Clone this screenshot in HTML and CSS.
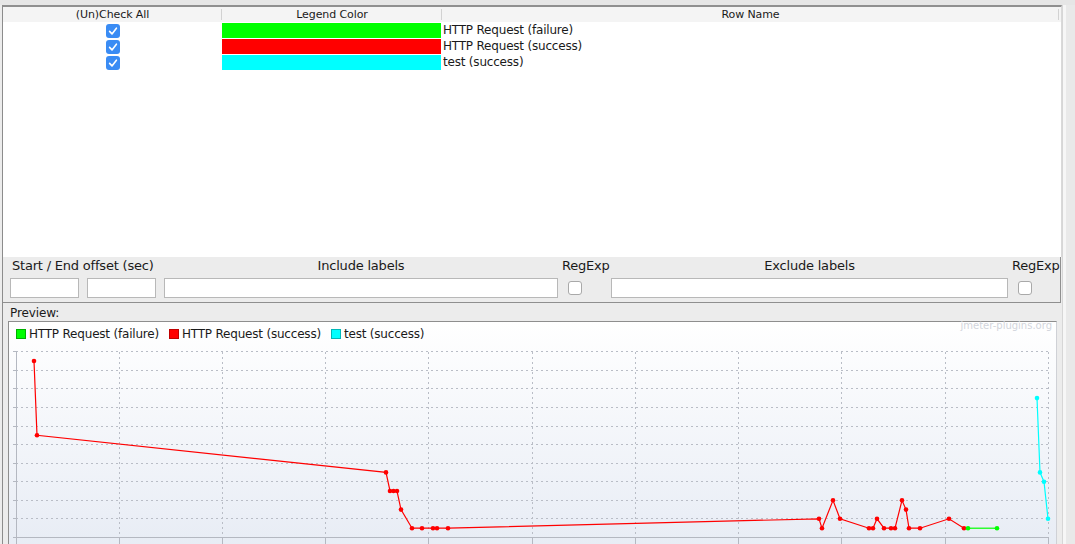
FILE: index.html
```html
<!DOCTYPE html>
<html>
<head>
<meta charset="utf-8">
<link rel="stylesheet" href="styles.css">
</head>
<body>
<div class="app">
  <div class="topbar"></div>
  <div class="row">
    <div class="main">
      <div class="table-panel">
        <div class="thead">
          <div class="th c1">(Un)Check All</div>
          <div class="th c2">Legend Color</div>
          <div class="th c3">Row Name</div>
        </div>
        <div class="tbody">
          <div class="tr">
            <div class="td c1"><svg class="cb" width="14" height="14" viewBox="0 0 14 14"><rect x="0" y="0" width="14" height="14" rx="3" fill="#3a8cf4"/><path d="M3.6 7.4 L6 9.9 L10.4 4.2" fill="none" stroke="#fff" stroke-width="1.6" stroke-linecap="round" stroke-linejoin="round"/></svg></div>
            <div class="td c2"><span class="swatch green"></span></div>
            <div class="td c3">HTTP Request (failure)</div>
          </div>
          <div class="tr">
            <div class="td c1"><svg class="cb" width="14" height="14" viewBox="0 0 14 14"><rect x="0" y="0" width="14" height="14" rx="3" fill="#3a8cf4"/><path d="M3.6 7.4 L6 9.9 L10.4 4.2" fill="none" stroke="#fff" stroke-width="1.6" stroke-linecap="round" stroke-linejoin="round"/></svg></div>
            <div class="td c2"><span class="swatch red"></span></div>
            <div class="td c3">HTTP Request (success)</div>
          </div>
          <div class="tr">
            <div class="td c1"><svg class="cb" width="14" height="14" viewBox="0 0 14 14"><rect x="0" y="0" width="14" height="14" rx="3" fill="#3a8cf4"/><path d="M3.6 7.4 L6 9.9 L10.4 4.2" fill="none" stroke="#fff" stroke-width="1.6" stroke-linecap="round" stroke-linejoin="round"/></svg></div>
            <div class="td c2"><span class="swatch cyan"></span></div>
            <div class="td c3">test (success)</div>
          </div>
        </div>
      </div>

      <div class="filter-panel">
        <div class="lbl left">Start / End offset (sec)</div>
        <div class="lbl">Include labels</div>
        <div class="lbl">RegExp</div>
        <div class="lbl">Exclude labels</div>
        <div class="lbl">RegExp</div>
        <div class="offsets"><span class="input small"></span><span class="input small"></span></div>
        <span class="input"></span>
        <div class="cbcell"><span class="box"></span></div>
        <span class="input"></span>
        <div class="cbcell"><span class="box"></span></div>
      </div>

      <div class="preview-panel">
        <div class="preview-label">Preview:</div>
        <div class="chart">
          <div class="chart-head">
            <div class="legend">
              <span class="item"><span class="sq green"></span>HTTP Request (failure)</span>
              <span class="item"><span class="sq red"></span>HTTP Request (success)</span>
              <span class="item"><span class="sq cyan"></span>test (success)</span>
            </div>
            <div class="watermark">jmeter-plugins.org</div>
          </div>
          <svg class="plot" width="1047" height="198" viewBox="0 0 1047 198">
            <g stroke="#b9bdc6" stroke-width="1" stroke-dasharray="2 3" fill="none">
              <line x1="7" y1="5.5" x2="1040" y2="5.5"/>
              <line x1="7" y1="24.5" x2="1040" y2="24.5"/>
              <line x1="7" y1="42.5" x2="1040" y2="42.5"/>
              <line x1="7" y1="61.5" x2="1040" y2="61.5"/>
              <line x1="7" y1="80.5" x2="1040" y2="80.5"/>
              <line x1="7" y1="98.5" x2="1040" y2="98.5"/>
              <line x1="7" y1="117.5" x2="1040" y2="117.5"/>
              <line x1="7" y1="135.5" x2="1040" y2="135.5"/>
              <line x1="7" y1="154.5" x2="1040" y2="154.5"/>
              <line x1="7" y1="172.5" x2="1040" y2="172.5"/>
              <line x1="110.5" y1="6" x2="110.5" y2="191"/>
              <line x1="213.5" y1="6" x2="213.5" y2="191"/>
              <line x1="316.5" y1="6" x2="316.5" y2="191"/>
              <line x1="419.5" y1="6" x2="419.5" y2="191"/>
              <line x1="523.5" y1="6" x2="523.5" y2="191"/>
              <line x1="626.5" y1="6" x2="626.5" y2="191"/>
              <line x1="729.5" y1="6" x2="729.5" y2="191"/>
              <line x1="832.5" y1="6" x2="832.5" y2="191"/>
              <line x1="936.5" y1="6" x2="936.5" y2="191"/>
              <line x1="1039.5" y1="6" x2="1039.5" y2="191"/>
            </g>
            <g stroke="#b4b8c1" stroke-width="1" fill="none">
              <line x1="7.5" y1="5" x2="7.5" y2="198"/>
              <line x1="4" y1="191.5" x2="1040" y2="191.5"/>
              <line x1="4" y1="5.5" x2="7" y2="5.5"/>
              <line x1="4" y1="24.5" x2="7" y2="24.5"/>
              <line x1="4" y1="42.5" x2="7" y2="42.5"/>
              <line x1="4" y1="61.5" x2="7" y2="61.5"/>
              <line x1="4" y1="80.5" x2="7" y2="80.5"/>
              <line x1="4" y1="98.5" x2="7" y2="98.5"/>
              <line x1="4" y1="117.5" x2="7" y2="117.5"/>
              <line x1="4" y1="135.5" x2="7" y2="135.5"/>
              <line x1="4" y1="154.5" x2="7" y2="154.5"/>
              <line x1="4" y1="172.5" x2="7" y2="172.5"/>
              <line x1="110.5" y1="192" x2="110.5" y2="198"/>
              <line x1="213.5" y1="192" x2="213.5" y2="198"/>
              <line x1="316.5" y1="192" x2="316.5" y2="198"/>
              <line x1="419.5" y1="192" x2="419.5" y2="198"/>
              <line x1="523.5" y1="192" x2="523.5" y2="198"/>
              <line x1="626.5" y1="192" x2="626.5" y2="198"/>
              <line x1="729.5" y1="192" x2="729.5" y2="198"/>
              <line x1="832.5" y1="192" x2="832.5" y2="198"/>
              <line x1="936.5" y1="192" x2="936.5" y2="198"/>
              <line x1="1039.5" y1="192" x2="1039.5" y2="198"/>
            </g>
            <polyline fill="none" stroke="#ff0000" stroke-width="1.2" points="25,15 28,89.3 377,126.4 381,145 384.5,145 388,145 392,163.6 403,182.2 413,182.2 424,182.2 428,182.2 439,182.2 810,172.8 813,182.2 824,154.3 831,172.8 860,182.2 864,182.2 868,172.8 875,182.2 882,182.2 886,182.2 893,154.3 897,163.6 900,182.2 911,182.2 940,172.8 955,182.2"/>
            <g fill="#ff0000">
              <circle cx="25" cy="15" r="2.3"/><circle cx="28" cy="89.3" r="2.3"/><circle cx="377" cy="126.4" r="2.3"/><circle cx="381" cy="145" r="2.3"/><circle cx="384.5" cy="145" r="2.3"/><circle cx="388" cy="145" r="2.3"/><circle cx="392" cy="163.6" r="2.3"/><circle cx="403" cy="182.2" r="2.3"/><circle cx="413" cy="182.2" r="2.3"/><circle cx="424" cy="182.2" r="2.3"/><circle cx="428" cy="182.2" r="2.3"/><circle cx="439" cy="182.2" r="2.3"/><circle cx="810" cy="172.8" r="2.3"/><circle cx="813" cy="182.2" r="2.3"/><circle cx="824" cy="154.3" r="2.3"/><circle cx="831" cy="172.8" r="2.3"/><circle cx="860" cy="182.2" r="2.3"/><circle cx="864" cy="182.2" r="2.3"/><circle cx="868" cy="172.8" r="2.3"/><circle cx="875" cy="182.2" r="2.3"/><circle cx="882" cy="182.2" r="2.3"/><circle cx="886" cy="182.2" r="2.3"/><circle cx="893" cy="154.3" r="2.3"/><circle cx="897" cy="163.6" r="2.3"/><circle cx="900" cy="182.2" r="2.3"/><circle cx="911" cy="182.2" r="2.3"/><circle cx="940" cy="172.8" r="2.3"/><circle cx="955" cy="182.2" r="2.3"/>
            </g>
            <polyline fill="none" stroke="#00ff00" stroke-width="1.2" points="959,182.2 988,182.2"/>
            <g fill="#00ff00"><circle cx="959" cy="182.2" r="2.3"/><circle cx="988" cy="182.2" r="2.3"/></g>
            <polyline fill="none" stroke="#00ffff" stroke-width="1.2" points="1028,52.1 1031,126.4 1035,135.7 1039,172.8"/>
            <g fill="#00ffff"><circle cx="1028" cy="52.1" r="2.3"/><circle cx="1031" cy="126.4" r="2.3"/><circle cx="1035" cy="135.7" r="2.3"/><circle cx="1039" cy="172.8" r="2.3"/></g>
          </svg>
        </div>
      </div>
    </div>
    <div class="sidebar"></div>
  </div>
</div>
</body>
</html>
```

FILE: styles.css
```css
* { box-sizing: border-box; }
html, body { margin: 0; padding: 0; }
body {
  background: #ececec;
  font-family: "DejaVu Sans", "Liberation Sans", sans-serif;
  color: #1a1a1a;
  overflow: hidden;
}
.app {
  width: 1075px;
  height: 544px;
  display: flex;
  flex-direction: column;
  overflow: hidden;
}
.topbar {
  height: 5px;
  flex: 0 0 5px;
  background: #e6e6e6;
}
.row {
  display: flex;
  flex: 1 1 auto;
  min-height: 0;
}
.main {
  margin-left: 2px;
  width: 1060px;
  flex: 0 0 1060px;
  border-left: 1px solid #8c8c8c;
  display: flex;
  flex-direction: column;
  min-height: 0;
}
.sidebar {
  flex: 1 1 auto;
  background: #e9e9e9;
  border-left: 1px solid #d6d6d6;
  box-shadow: inset 3px 0 0 #f6f6f6;
}

/* table */
.table-panel {
  height: 252px;
  flex: 0 0 252px;
  border-top: 2px solid #8f8f8f;
  background: #fff;
  border-right: 1px solid #d9d9d9;
}
.thead {
  display: flex;
  height: 15px;
  background: #f4f4f4;
}
.th {
  font-size: 11px;
  letter-spacing: -0.1px;
  line-height: 15px;
  text-align: center;
  background: linear-gradient(#d2d2d2, #d2d2d2) right center / 1px 11px no-repeat;
}
.c1 { width: 219px; flex: 0 0 219px; }
.c2 { width: 220px; flex: 0 0 220px; }
.c3 { flex: 1 1 auto; }
.th.c3 { margin-right: 2px; }
.tr {
  display: flex;
  height: 16px;
}
.td.c1 {
  display: flex;
  justify-content: center;
  align-items: flex-start;
  padding-top: 2px;
}
.td.c2 { padding-top: 1px; }
.td.c3 {
  font-size: 12px;
  letter-spacing: -0.2px;
  line-height: 17px;
  padding-left: 1px;
}
.cb { display: block; }
.swatch {
  display: block;
  width: 219px;
  height: 15px;
}
.green { background: #00ff00; }
.red { background: #ff0000; }
.cyan { background: #00ffff; }

/* filter */
.filter-panel {
  height: 46px;
  flex: 0 0 46px;
  margin-right: 1px;
  border-right: 1px solid #8f8f8f;
  border-bottom: 1px solid #8f8f8f;
  padding: 1px 0 4px 7px;
  display: grid;
  grid-template-columns: 150px 394px 45px 397px 45px;
  grid-template-rows: 16px 20px;
  column-gap: 4px;
  row-gap: 4px;
}
.lbl {
  font-size: 13px;
  letter-spacing: -0.2px;
  line-height: 16px;
  text-align: center;
  white-space: nowrap;
}
.lbl.left { text-align: left; padding-left: 2px; }
.offsets {
  display: flex;
  gap: 8px;
}
.input {
  display: block;
  height: 20px;
  background: #fff;
  border: 1px solid #b8b8b8;
}
.input.small { width: 69px; }
.cbcell {
  display: flex;
  align-items: center;
  padding-left: 6px;
}
.box {
  display: block;
  width: 14px;
  height: 14px;
  border: 1px solid #a9a9a9;
  border-radius: 3px;
  background: #fff;
}

/* preview */
.preview-panel {
  flex: 1 1 auto;
  padding-top: 2px;
  padding-left: 5px;
  min-height: 0;
}
.preview-label {
  font-size: 12px;
  letter-spacing: -0.1px;
  line-height: 16px;
  padding-left: 2px;
}
.chart {
  width: 1049px;
  height: 240px;
  border-top: 1px solid #8e8e8e;
  border-left: 1px solid #8e8e8e;
  border-right: 1px solid #cfd1d6;
  background: linear-gradient(#ffffff 0%, #e6ebf4 100%);
}
.chart-head {
  display: flex;
  justify-content: space-between;
  align-items: flex-start;
  height: 24px;
}
.legend {
  display: flex;
  padding-top: 4px;
  padding-left: 7px;
  gap: 10px;
  font-size: 12px;
  letter-spacing: -0.2px;
  line-height: 16px;
}
.item {
  display: flex;
  align-items: center;
  gap: 3px;
  white-space: nowrap;
}
.sq {
  display: block;
  width: 10px;
  height: 10px;
}
.sq.green { border: 1px solid #00b000; }
.sq.red { border: 1px solid #c00000; }
.sq.cyan { border: 1px solid #00b8b8; }
.watermark {
  font-size: 10px;
  line-height: 8px;
  color: #d2d5dc;
  padding-right: 4px;
  white-space: nowrap;
}
.plot { display: block; }
```
